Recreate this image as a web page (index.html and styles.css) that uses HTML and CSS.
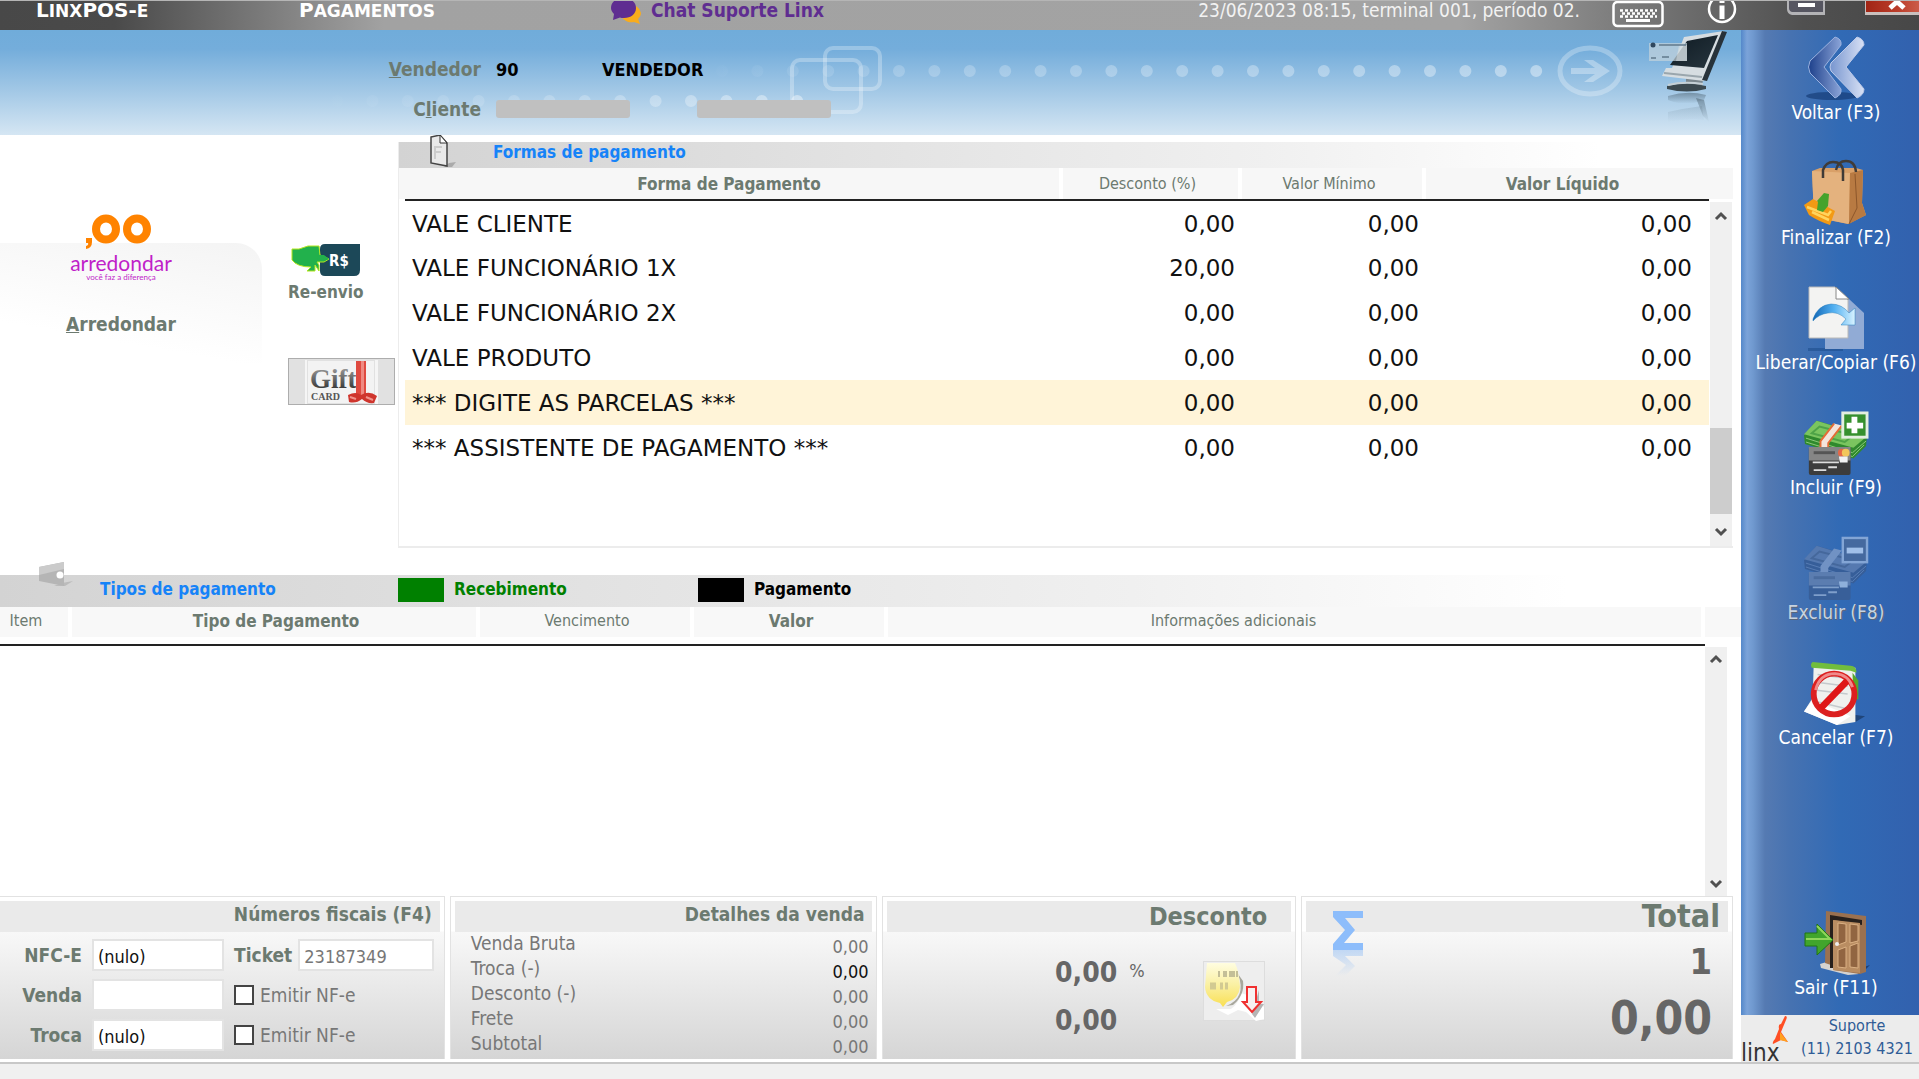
FILE: index.html
```html
<!DOCTYPE html>
<html lang="pt-BR">
<head>
<meta charset="utf-8">
<title>LinxPOS-e - Pagamentos</title>
<link rel="stylesheet" href="styles.css">
</head>
<body>
<header class="topbar">
  <span class="app-name">L<span class="low">inx</span>POS-<span class="low">e</span></span>
  <h1 class="page-name">P<span class="low">agamentos</span></h1>
  <a class="chat" href="#chat">
    <svg width="34" height="26" viewBox="0 0 34 26" aria-hidden="true"><path d="M20 4a10 10 0 0 1 11 8c0 3-2 5-3 6l2 5-6-2c-5 1-10-1-12-5z" fill="#f9ac1c"/><path d="M13-3c8 0 13 4 13 10s-5 10-12 10c-2 0-3 0-4-.5L3 19l1-6C2 11 1 9 1 7 1 1 6-3 13-3z" fill="#5f2d91"/></svg>
    <span>Chat Suporte Linx</span>
  </a>
  <span class="session">23/06/2023 08:15, terminal 001, período 02.</span>
  <button class="icon-btn keyboard" aria-label="Teclado">
    <svg width="52" height="28" viewBox="0 1 52 28"><rect x="1.500" y="2" width="49" height="24" rx="4" fill="none" stroke="#fff" stroke-width="2.500"/><path d="M26 2v-3" stroke="#fff" stroke-width="2"/><path d="M8 10.500h37M10 13.500h35M8 16.500h37" stroke="#fff" stroke-width="2.600" stroke-dasharray="3 2"/><path d="M14 20.500h24" stroke="#fff" stroke-width="3"/></svg>
  </button>
  <button class="icon-btn info" aria-label="Informações">
    <svg width="30" height="26" viewBox="0 1 30 26"><circle cx="15" cy="9" r="13" fill="none" stroke="#fff" stroke-width="2.500"/><path d="M15 5.500V19M15-1v4" stroke="#fff" stroke-width="5"/></svg>
  </button>
  <button class="icon-btn minimize" aria-label="Minimizar">
    <svg width="38" height="16" viewBox="0 1 38 16"><path d="M0 0h38v15H5q-5-1-5-6z" fill="#b3b3b6"/><path d="M2 0h34v12H5q-3-1-3-4z" fill="#565661"/><path d="M11 3h17v4H11z" fill="#fff"/></svg>
  </button>
  <button class="icon-btn close" aria-label="Fechar">
    <svg width="54" height="16" viewBox="0 1 54 16"><defs><linearGradient id="close" x2="1"><stop stop-color="#a12515"/><stop offset=".6" stop-color="#bb3d2a"/><stop offset="1" stop-color="#cb5c49"/></linearGradient></defs><path d="M0 0h54v15H0z" fill="#c9c0be"/><path d="M1 0h53v12H1z" fill="url(#close)"/><path d="M25 8l9-8M39 8L30 0" stroke="#fff" stroke-width="5"/></svg>
  </button>
</header>

<div class="workspace">
  <main class="content">
    <section class="banner">
      <svg class="banner-art" width="1741" height="105" viewBox="0 30 1741 105" aria-hidden="true">
        <defs>
          <linearGradient id="dotsA" gradientUnits="userSpaceOnUse" x1="700" x2="1540" y1="0" y2="0"><stop stop-color="#fff" stop-opacity="0"/><stop offset=".25" stop-color="#fff" stop-opacity=".2"/><stop offset="1" stop-color="#fff" stop-opacity=".4"/></linearGradient>
          <linearGradient id="dotsB" gradientUnits="userSpaceOnUse" x1="320" x2="800" y1="0" y2="0"><stop stop-color="#fff" stop-opacity="0"/><stop offset="1" stop-color="#fff" stop-opacity=".4"/></linearGradient>
          <linearGradient id="screen" x2="1" y2="1"><stop stop-color="#0f1a22"/><stop offset="1" stop-color="#27363f"/></linearGradient>
          <linearGradient id="mirror" x2="0" y2="1"><stop stop-color="#4d6270" stop-opacity=".55"/><stop offset="1" stop-color="#4d6270" stop-opacity="0"/></linearGradient>
        </defs>
        <path d="M722 71H1537" stroke="url(#dotsA)" stroke-width="12" stroke-linecap="round" stroke-dasharray="0 35.400"/>
        <path d="M337 101H802" stroke="url(#dotsB)" stroke-width="12" stroke-linecap="round" stroke-dasharray="0 35.400"/>
        <g fill="none" stroke="#fff" stroke-opacity=".28"><rect x="792" y="60" width="69" height="52" rx="8" stroke-width="4"/><rect x="825" y="48" width="55" height="41" rx="8" stroke-width="4"/><ellipse cx="1590" cy="71" rx="30" ry="23" stroke-width="5"/></g>
        <path d="M1571 68h24l-11-8h9l17 11-17 11h-9l11-8h-24z" fill="#fff" opacity=".33"/>
        <path d="M1668 96q20-6 38-1l-2 5-10 3q-14 2-26-3z" fill="url(#mirror)"/><path d="M1696 98l8 2 5 22-6-6z" fill="url(#mirror)"/><path d="M1668 112q18-4 34-6l2 14q-18-2-36 2z" fill="url(#mirror)" opacity=".3"/>
        <path d="M1686 76l17 3-1 8h-16z" fill="#7b878e"/><path d="M1667 86q18-5 39 0v3q-19 5-39 0z" fill="#3b4950"/><path d="M1668 85q16-4 35-1" stroke="#c5d0d6" stroke-width="2" fill="none"/>
        <path d="M1684 37l40-6-20 50-42-5 4-8h6z" fill="#d6dde1"/><path d="M1722 31l5 1-20 49-5-1z" fill="#27323a"/><path d="M1687 41l31-6-14 33-34-3z" fill="url(#screen)"/>
        <path d="M1664 73l38 4" stroke="#9aa6ad" stroke-width="2"/>
        <path d="M1649 43h38v18h-38z" fill="#c5d3dc" opacity=".7"/><path d="M1679 45h8v16h-11z" fill="#dde3e6" opacity=".5"/><circle cx="1653" cy="45" r="2.500" fill="#30485e"/><path d="M1659 45h27M1651 58h5M1662 57h7" stroke="#627a8c" stroke-width="1.500"/>
      </svg>
      <dl class="people">
        <div class="person"><dt><u>V</u>endedor</dt><dd class="code">90</dd><dd>VENDEDOR</dd></div>
        <div class="person"><dt>C<u>l</u>iente</dt><dd class="redacted"></dd><dd class="redacted"></dd></div>
      </dl>
    </section>

    <div class="upper">
      <aside class="shortcuts">
        <div class="round-up">
          <svg width="104" height="40" viewBox="0 0 104 40" aria-hidden="true"><g fill="none" stroke="#ff8300" stroke-width="8"><ellipse cx="37" cy="16" rx="10" ry="10.500"/><ellipse cx="68" cy="16" rx="10" ry="10.500"/></g><path d="M17 25h6v4q0 6-6 7v-3q3-1 2-3h-2z" fill="#ff8300"/></svg>
          <span class="brand">arredondar</span>
          <span class="slogan">você faz a diferença</span>
          <button class="text-btn round-label"><u>A</u>rredondar</button>
        </div>
        <div class="side-actions">
          <button class="text-btn resend">
            <svg width="70" height="34" viewBox="0 0 70 34" aria-hidden="true"><path d="M34 1h35v26q0 6-6 6H34q-5 0-5-5V6q0-5 5-5z" fill="#1c4858"/><path d="M1 6h7l9-3h11l1 9 5 2 4 2-5 3H26l2 3v6l-4-6v6h-8l4-4Q6 24 1 17z" fill="#22b14c" stroke="#b5e61d"/><path d="M27 12h6l5 4-5 2h-7z" fill="#22b14c"/><text x="38" y="23" class="rs">R$</text></svg>
            <span>Re-envio</span>
          </button>
          <button class="gift" aria-label="Gift Card">
            <svg width="74" height="44" viewBox="0 0 74 44"><defs><linearGradient id="giftInk" x2="0" y2="1"><stop stop-color="#aaa"/><stop offset="1" stop-color="#222"/></linearGradient></defs><path d="M0 0h2v44H0zM70 0h3v44h-3z" fill="#f5f5f5"/><rect x="3" y="1" width="66" height="42" fill="#f3f3f3"/><text x="5" y="28" class="gift-word" fill="url(#giftInk)">Gift</text><text x="6" y="40" class="gift-small">CARD</text><path d="M51 1h10v34H51z" fill="#df4a40"/><path d="M56 1h3v34h-3z" fill="#ef8a82"/><path d="M43 35q8-4 13 0 8-5 16 1l-3 7q-7 1-12-4-6 5-13 3z" fill="#cf352d"/><path d="M45 37l6 2M61 37l7 3" stroke="#f1928b" stroke-width="2"/></svg>
          </button>
        </div>
      </aside>

      <section class="methods">
        <h2 class="strip methods-title">
          <svg width="30" height="34" viewBox="0 0 30 34" aria-hidden="true"><path d="M22 29l7-1-4 5h-8z" fill="#aaa"/><path d="M4 3l9-2 7 8v23L4 29z" fill="#e9e9e9" stroke="#444" stroke-width="1.500"/><path d="M13 1v8h7z" fill="#fff" stroke="#333"/><path d="M8 12v13M8 13h7M8 18h6" stroke="#ccc" stroke-width="2"/></svg>
          <span>Formas de pagamento</span>
        </h2>
        <div class="grid-area">
          <table class="methods-table">
            <thead><tr><th class="strong">Forma de Pagamento</th><th class="c-disc">Desconto (%)</th><th class="c-min">Valor Mínimo</th><th class="c-net strong">Valor Líquido</th></tr></thead>
            <tbody>
              <tr><td>VALE CLIENTE</td><td>0,00</td><td>0,00</td><td>0,00</td></tr>
              <tr><td>VALE FUNCIONÁRIO 1X</td><td>20,00</td><td>0,00</td><td>0,00</td></tr>
              <tr><td>VALE FUNCIONÁRIO 2X</td><td>0,00</td><td>0,00</td><td>0,00</td></tr>
              <tr><td>VALE PRODUTO</td><td>0,00</td><td>0,00</td><td>0,00</td></tr>
              <tr class="selected"><td>*** DIGITE AS PARCELAS ***</td><td>0,00</td><td>0,00</td><td>0,00</td></tr>
              <tr><td>*** ASSISTENTE DE PAGAMENTO ***</td><td>0,00</td><td>0,00</td><td>0,00</td></tr>
            </tbody>
          </table>
          <div class="scroll scroll-methods">
            <svg width="12" height="8" viewBox="0 0 12 8"><path d="M1 7l5-5 5 5" class="chev"/></svg>
            <div class="thumb"></div>
            <svg width="12" height="8" viewBox="0 0 12 8"><path d="M1 1l5 5 5-5" class="chev"/></svg>
          </div>
        </div>
      </section>
    </div>

    <section class="types">
      <h2 class="strip types-title">
        <svg width="36" height="28" viewBox="0 0 36 28" aria-hidden="true"><path d="M24 21l11-2-8 5H16z" fill="#bbb"/><path d="M1 5l25-5v24L1 19z" fill="#b5b5b5"/><path d="M1 5l25-5v7L1 13z" fill="#cbcbcb"/><circle cx="22" cy="13" r="3.500" fill="#fff"/></svg>
        <span class="types-name">Tipos de pagamento</span>
        <span class="legend receipt">Recebimento</span>
        <span class="legend payment">Pagamento</span>
      </h2>
      <div class="types-area">
        <table class="types-table">
          <thead><tr><th class="c-item">Item</th><th class="c-type strong">Tipo de Pagamento</th><th class="c-due">Vencimento</th><th class="c-value strong">Valor</th><th class="c-info">Informações adicionais</th></tr></thead>
        </table>
        <div class="scroll scroll-types">
          <svg width="12" height="8" viewBox="0 0 12 8"><path d="M1 7l5-5 5 5" class="chev"/></svg>
          <svg width="12" height="8" viewBox="0 0 12 8"><path d="M1 1l5 5 5-5" class="chev"/></svg>
        </div>
      </div>
    </section>

    <div class="summary">
      <section class="panel">
        <h3>Números fiscais (F4)</h3>
        <form class="fiscal">
          <label class="name" for="nfce">NFC-E</label><input class="field" id="nfce" value="(nulo)">
          <div class="ticket"><label class="name" for="ticket">Ticket</label><input class="field muted" id="ticket" value="23187349"></div>
          <label class="name" for="venda">Venda</label><input class="field" id="venda">
          <label class="check"><input type="checkbox">Emitir NF-e</label>
          <label class="name" for="troca">Troca</label><input class="field" id="troca" value="(nulo)">
          <label class="check"><input type="checkbox">Emitir NF-e</label>
        </form>
      </section>
      <section class="panel">
        <h3>Detalhes da venda</h3>
        <dl class="details">
          <dt>Venda Bruta</dt><dd>0,00</dd>
          <dt>Troca (-)</dt><dd class="dark">0,00</dd>
          <dt>Desconto (-)</dt><dd>0,00</dd>
          <dt>Frete</dt><dd>0,00</dd>
          <dt>Subtotal</dt><dd>0,00</dd>
        </dl>
      </section>
      <section class="panel">
        <h3 class="medium">Desconto</h3>
        <div class="discount">
          <div class="amounts"><span>0,00</span><small>%</small><span>0,00</span></div>
          <button class="coin" aria-label="Aplicar desconto">
            <svg width="62" height="60" viewBox="0 0 62 60"><defs><linearGradient id="coin" x2="0" y2="1"><stop stop-color="#fffde0"/><stop offset=".5" stop-color="#faf0a2"/><stop offset="1" stop-color="#f9df52"/></linearGradient></defs><path d="M12 47h15q8-6 10-16l12 4 11 10v12l-8 2-10-9-8-2-10 5z" fill="#fff"/><path d="M34 12q9 24-12 32l7-1q12-10 10-24z" fill="#a8a79c"/><path d="M3 1h28q4 8 5 24-1 12-13 15l-4 5-3-4Q2 38 1 25z" fill="url(#coin)"/><path d="M14 12h20" stroke="#c4bf98" stroke-width="6" stroke-dasharray="2 3 4 2 6 1"/><path d="M6 24h18" stroke="#d2ca92" stroke-width="7" stroke-dasharray="6 4 3 2"/><path d="M55 28v14h5l-9 14-3-4z" fill="#b5b5b5"/><path d="M43 25h9v15h5l-9 10-9-10h4z" fill="#f7f0f0" stroke="#f03030" stroke-width="2"/></svg>
          </button>
        </div>
      </section>
      <section class="panel total">
        <svg class="sigma" width="34" height="66" viewBox="0 0 34 66" aria-hidden="true"><defs><linearGradient id="fade" x2="0" y2="1"><stop stop-color="#8fbcf5" stop-opacity=".5"/><stop offset="1" stop-color="#8fbcf5" stop-opacity="0"/></linearGradient></defs><path d="M1 0h30v7H13l10 12-11 13h19v7H1v-6l12-14L1 6z" fill="#8dbdfb"/><path d="M1 39h30v6H13l10 10-10 10H3l11-11L1 45z" fill="url(#fade)"/></svg>
        <h3 class="large">Total</h3>
        <div class="sums"><span class="count">1</span><span class="sum">0,00</span></div>
      </section>
    </div>
  </main>

  <nav class="sidebar">
    <div class="actions">
      <button class="action">
        <svg width="64" height="64" viewBox="0 0 64 64"><defs><linearGradient id="ch1"><stop stop-color="#1d408b"/><stop offset="1" stop-color="#8ba4d8"/></linearGradient><linearGradient id="ch2"><stop stop-color="#7795cf"/><stop offset="1" stop-color="#d8e1f5"/></linearGradient></defs><ellipse cx="28" cy="60" rx="26" ry="4" fill="#173d78" opacity=".7"/><path d="M31 1q7 2 6 8L20 31l17 22q1 6-6 9L6 37q-3-6 0-12z" fill="url(#ch1)" stroke="#9bb2df"/><path d="M53 1q7 2 7 8L42 31l18 22q0 6-7 9L27 35q-2-4 0-8z" fill="url(#ch2)" stroke="#bccae9"/></svg>
        <span>Voltar (F3)</span>
      </button>
      <button class="action">
        <svg width="64" height="64" viewBox="0 0 64 64"><path d="M8 10l8-3h36l7 2-1 33 4 12-18 9-34-7z" fill="#d9a068"/><path d="M8 10l38 2-1 51-35-7z" fill="#e4b27e"/><path d="M46 12l13-3-1 33 4 12-17 9z" fill="#b87a42"/><path d="M51 13l2 34-8 16" stroke="#8c562a" fill="none"/><path d="M19 17V9Q22 1 29 1q9 0 10 8v11M32 9Q34 0 42 0q9 0 10 11" fill="none" stroke="#403b37" stroke-width="2.500"/><path d="M0 44l9-6 22 12-5 14q-12-4-21-10z" fill="#f39a14"/><path d="M3 46l21 8 3-4M8 51l17 8" stroke="#ffd45e" stroke-width="2.500" fill="none"/><path d="M14 41l-1 8 6 2 5-6 1-12-5-1-7 8z" fill="#46a32c"/></svg>
        <span>Finalizar (F2)</span>
      </button>
      <button class="action">
        <svg width="64" height="64" viewBox="0 0 64 64"><defs><linearGradient id="swoop"><stop stop-color="#1267b6"/><stop offset=".5" stop-color="#53b1f2"/><stop offset="1" stop-color="#d9f3ff"/></linearGradient></defs><path d="M4 62h35v3H4z" fill="#174786" opacity=".5"/><path d="M21 13h24l15 14v36H21z" fill="#91abd5"/><path d="M5 1h26l13 13v38H5z" fill="#f3f3f2" stroke="#b9b9b9"/><path d="M32 1v12h13z" fill="#fff" stroke="#888"/><path d="M9 33Q14 19 27 18q11 0 18 9l6-5v17H37l5-6q-8-8-18-6-9 1-15 8z" fill="url(#swoop)" stroke="#2c80bd" stroke-width=".5"/></svg>
        <span>Liberar/Copiar (F6)</span>
      </button>
      <button class="action">
        <svg width="66" height="66" viewBox="0 0 66 66"><path d="M0 25L13 10l52 15-1 11-13 13L1 34z" fill="#2f892d"/><path d="M0 24L13 10l52 16-14 12z" fill="#7ac55f"/><path d="M8 23l8-7 35 9-9 7z" fill="none" stroke="#4ea347" stroke-width="2"/><path d="M2 28l48 15 14-12M2 32l48 15 12-12" stroke="#8cc97a" fill="none"/><path d="M31 13l8 2-14 18v7l-8-2v-7z" fill="#f4e4db"/><path d="M31 13L17 31v7M39 15L25 33v7" stroke="#e46b36" stroke-width="2" fill="none"/><rect x="5" y="37" width="43" height="29" rx="2" fill="#3c3c3c"/><path d="M5 37h43v14H5z" fill="#858585"/><path d="M10 43h22" stroke="#555" stroke-width="3"/><circle cx="39" cy="43" r="4" fill="#e56747"/><circle cx="43" cy="43" r="4" fill="#f3c65a"/><path d="M9 53h27M25 58h9M10 61h13" stroke="#ddd" stroke-width="2"/><path d="M36 47h9v6h-8z" fill="#f2f2f2"/><rect x="40" y="2" width="25" height="25" fill="#36902e" stroke="#e3eee0" stroke-width="3"/><path d="M52 6v17M44 15h17" stroke="#fff" stroke-width="6"/></svg>
        <span>Incluir (F9)</span>
      </button>
      <button class="action disabled">
        <svg width="66" height="66" viewBox="0 0 66 66"><path d="M0 25L13 10l52 15-1 11-13 13L1 34z" fill="#365e99"/><path d="M0 24L13 10l52 16-14 12z" fill="#5579b0"/><path d="M8 23l8-7 35 9-9 7z" fill="none" stroke="#45689c" stroke-width="2"/><path d="M2 28l48 15 14-12M2 32l48 15 12-12" stroke="#587db5" fill="none"/><path d="M31 13l8 2-14 18v7l-8-2v-7z" fill="#7192c4"/><rect x="5" y="37" width="43" height="29" rx="2" fill="#385f99"/><path d="M5 37h43v14H5z" fill="#5b7db0"/><path d="M10 43h22" stroke="#4a6c9e" stroke-width="3"/><path d="M9 53h27M25 58h9M10 61h13" stroke="#7f9fcb" stroke-width="2"/><path d="M36 47h9v6h-8z" fill="#8fb0da"/><rect x="40" y="2" width="25" height="25" fill="#45699f" stroke="#83a5d5" stroke-width="2.500"/><path d="M44 15h17" stroke="#a0bfe9" stroke-width="6"/></svg>
        <span>Excluir (F8)</span>
      </button>
      <button class="action">
        <svg width="66" height="66" viewBox="0 0 66 66"><path d="M48 55l15 2-10 6H40z" fill="#204579"/><path d="M10 3l43 4v56l-19 3L0 52l9-14z" fill="#eff0ed"/><path d="M9 40L0 52l34 14 14-9z" fill="#fff"/><path d="M50 12l6 8v20l-5-3z" fill="#57a82c"/><path d="M9 1l39 4q6 0 6 7l-6-2-40-3q-2-4 1-6z" fill="#71bd3d"/><path d="M14 14l32 4M13 22l32 4M11 30l34 4M9 41l34 8" stroke="#c4c9cc" stroke-width="1.500"/><ellipse cx="31" cy="34" rx="21" ry="21" fill="none" stroke="#dc2020" stroke-width="6"/><path d="M17 49L45 20" stroke="#df1717" stroke-width="7"/><path d="M12 30q4-17 20-17 14 1 18 14" stroke="#f08b8b" stroke-width="3" fill="none"/></svg>
        <span>Cancelar (F7)</span>
      </button>
      <button class="action exit">
        <svg width="64" height="64" viewBox="0 0 64 64"><path d="M16 53l13-4 26 14-11 1-27-7z" fill="#d5d3d0"/><path d="M60 56l6-2-7 7z" fill="#1b3f77"/><path d="M22 0l40 5v56l-6 2-27-4V8l-2-1v47l-6-2z" fill="#9a7150"/><path d="M26 4l32 5v5L30 9v48h-4z" fill="#27201c"/><path d="M29 9l27 3v50l-27-3z" fill="#b98d62"/><path d="M34 12l8 1v18l-8 3zM46 13l8 1v16l-8 2zM34 39l8-3v21l-8-1zM46 35l8-3v25l-8-1z" fill="#916541" stroke="#dbb184"/><path d="M1 22h12v-9l16 16-16 15v-9H1z" fill="#41a52c" stroke="#207712"/><path d="M13 15l13 13H2" stroke="#91d65b" stroke-width="2" fill="none"/><circle cx="33" cy="33" r="2" fill="#eee"/></svg>
        <span>Sair (F11)</span>
      </button>
    </div>
    <div class="support">
      <svg width="48" height="47" viewBox="0 0 48 47" aria-hidden="true"><path d="M44 1q3 0 1 4l-5 12 7 10-7-2-8 4q-1-2 2-5l4-10q-1-5 2-5z" fill="#ff4f24"/><path d="M39 17l8 10-8-2z" fill="#ffa21f"/><text x="0" y="46" class="linx">linx</text></svg>
      <p>Suporte<br>(11) 2103 4321</p>
    </div>
  </nav>
</div>
<footer class="statusbar"></footer>
</body>
</html>
```
FILE: styles.css
```css
* { box-sizing: border-box; }

body {
  margin: 0;
  min-height: 100vh;
  display: flex;
  flex-direction: column;
  background: #fff;
  color: #6c7a70;
  font: 19px/24px "DejaVu Sans Condensed", "DejaVu Sans", sans-serif;
}

h1, h2, h3, p, dl, dd { margin: 0; }
button, input { font: inherit; }
button { padding: 0; border: 0; background: none; cursor: pointer; }
svg { display: block; flex: none; overflow: visible; }

/* Title bar */
.topbar {
  display: flex;
  align-items: flex-start;
  height: 30px;
  padding-left: 36px;
  overflow: hidden;
  border-top: 1px solid #b5b5b5;
  background: linear-gradient(90deg, #484848 0, #4a4a4a 6%, #a2a2a2 20%, #a3a3a3 76%, #505050 94%, #474747);
  color: #fff;
  line-height: 18px;
}
.app-name, .page-name {
  font: bold 20px/18px "DejaVu Sans", sans-serif;
  text-transform: uppercase;
}
.low { font-size: 17px; }
.app-name { width: 263px; }
.page-name { width: 311px; }
.chat {
  display: flex;
  gap: 7px;
  color: #5f2d91;
  font-weight: bold;
  text-decoration: none;
}
.session { margin-left: auto; margin-right: 32px; color: #f2f2f2; }
.keyboard { margin-right: 43px; }
.info { margin-right: 50px; }
.minimize { margin-right: 40px; }

.workspace { flex: 1; display: flex; }
.content { flex: 1; min-width: 0; display: flex; flex-direction: column; padding-bottom: 3px; }

/* Seller and customer banner */
.banner {
  position: relative;
  height: 105px;
  overflow: hidden;
  background: linear-gradient(#70acda, #74addb 18%, #9fc6e5 55%, #d5e6f3);
}
.banner-art { position: absolute; top: 0; right: 0; }
.people { position: relative; padding-top: 19px; font-weight: bold; }
.person { display: flex; align-items: center; height: 40px; }
.person dt { width: 496px; padding-right: 15px; text-align: right; }
.person dd { padding-top: 2px; color: #000; font-size: 18px; }
.person .code { width: 106px; }
.person .redacted { width: 134px; height: 18px; margin-right: 67px; border-radius: 3px; background: #c0c0c0; }

/* Shortcuts and payment methods */
.upper { display: flex; height: 440px; padding: 7px 8px 27px 0; }
.shortcuts { width: 398px; display: flex; padding-top: 71px; }
.round-up {
  position: relative;
  width: 262px;
  display: flex;
  flex-direction: column;
  align-items: center;
  padding-right: 20px;
}
.round-up::before {
  content: "";
  position: absolute;
  z-index: -1;
  inset: 30px 0 auto 0;
  height: 120px;
  border-radius: 0 26px 0 0;
  background: linear-gradient(190deg, #f4f4f4, #fff 75%);
}
.brand { color: #c01fc9; font: 21px/20px Lato, sans-serif; }
.slogan { color: #c01fc9; font: 8px/8px Lato, sans-serif; }
.text-btn { color: #6c7a70; font-weight: bold; }
.round-label { margin-top: 31px; }
.side-actions { padding-top: 30px; display: flex; flex-direction: column; align-items: flex-start; width: 136px; padding-left: 26px; }
.resend { display: flex; flex-direction: column; align-items: center; gap: 3px; font-size: 17px; }
.rs { fill: #fff; font: bold 15px "DejaVu Sans Condensed", sans-serif; }
.gift {
  margin-top: 54px;
  width: 107px;
  height: 47px;
  display: grid;
  place-items: center;
  border: 1px solid #adadad;
  background: #e1e1e1;
}
.gift-word { font: bold 27px "Liberation Serif", serif; }
.gift-small { font: bold 10px "Liberation Serif", serif; fill: #555; }

.strip { display: flex; font-size: 17px; color: #1683f8; background: linear-gradient(90deg, #d3d3d3, #f0f0f0 65%, #fff 90%); }
.methods { flex: 1; display: flex; flex-direction: column; border: solid #ececec; border-width: 0 0 2px 1px; }
.methods-title { height: 26px; padding-left: 28px; gap: 36px; align-items: flex-start; line-height: 20px; }
.methods-title svg { margin-top: -8px; }
.grid-area { flex: 1; display: flex; padding-left: 6px; background: linear-gradient(#f7f7f7 31px, #fff 31px); }

table { border-collapse: collapse; table-layout: fixed; }
th {
  padding: 0;
  border-bottom: 2px solid #222;
  background: linear-gradient(#fff, #fff) right / 4px 100% no-repeat;
  font-size: 16px;
  font-weight: normal;
}
th.strong { font-size: 17px; font-weight: bold; }
.methods-table { flex: 1; align-self: flex-start; }
.methods-table th { height: 32px; padding-right: 10px; }
.methods-table th:last-child { background: none; }
.c-disc { width: 179px; }
.c-min { width: 184px; }
.c-net { width: 283px; }
.methods-table td {
  height: 45px;
  padding: 1px 7px 0;
  color: #111;
  font: 23px/26px "DejaVu Sans", sans-serif;
  text-align: right;
}
.methods-table td:first-child { text-align: left; }
.methods-table td:last-child { padding-right: 17px; }
.selected { background: #fff4d8; }

.scroll { width: 22px; display: flex; flex-direction: column; align-items: center; justify-content: space-between; background: #f0f0f0; padding: 10px 0; }
.chev { fill: none; stroke: #505050; stroke-width: 3; }
.scroll-methods { margin: 34px 1px 0; }
.thumb { width: 22px; height: 86px; margin-top: auto; margin-bottom: 14px; background: #cdcdcd; }

/* Payments already entered */
.types { flex: 1; display: flex; flex-direction: column; min-height: 200px; }
.types-title { height: 32px; padding: 0 0 4px 38px; align-items: center; line-height: 22px; }
.types-title svg { margin-top: -27px; margin-right: 26px; }
.types-name { width: 298px; }
.legend { display: flex; align-items: center; gap: 10px; width: 300px; }
.legend::before { content: ""; width: 46px; height: 24px; margin-top: 2px; background: currentColor; }
.receipt { color: #008000; }
.payment { color: #000; }
.types-area { flex: 1; display: flex; padding-right: 14px; background: linear-gradient(#f8f8f8 30px, #fff 30px); }
.types-table { flex: 1; align-self: flex-start; }
.types-table th { height: 38px; padding-bottom: 9px; }
.types-table .c-item { width: 72px; padding-right: 20px; }
.c-type { width: 408px; }
.c-due { width: 214px; }
.c-value { width: 194px; }
.types-table .c-info { padding-right: 126px; }
.scroll-types { margin-top: 40px; padding: 8px 0; }

/* Summary panels */
.summary {
  display: grid;
  grid-template-columns: 445fr 428fr 414fr 432fr;
  gap: 5px;
  padding-right: 8px;
}
.panel {
  position: relative;
  min-height: 163px;
  border: 1px solid #e2e2e2;
  border-bottom: 0;
  background: linear-gradient(#fff 34px, #f8f8f8 35px, #d5d5d5);
}
.panel:first-child { border-left: 0; }
.panel h3 { height: 31px; margin: 4px 4px 0; padding-right: 8px; background: #eaeaea; font-size: 19px; line-height: 26px; text-align: right; }
.panel:first-child h3 { margin-left: 0; }
.panel .medium { font-size: 25px; padding-right: 24px; line-height: 31px; }
.panel .large { font-size: 32px; line-height: 31px; }
.fiscal {
  display: grid;
  grid-template-columns: 82px 132px 1fr;
  grid-template-rows: repeat(3, 32px);
  gap: 8px 10px;
  padding-top: 7px;
  align-items: center;
}
.name { font-weight: bold; text-align: right; }
.field { width: 100%; min-width: 0; height: 32px; padding: 2px 4px 0; border: 2px solid #e3e3e3; background: #fff; color: #111; font-size: 18px; }
.ticket { display: flex; align-items: center; gap: 6px; padding-right: 10px; }
.muted, .check { color: #777; }
.check { display: flex; align-items: center; gap: 6px; }
.check input { appearance: none; width: 20px; height: 20px; margin: 0; border: 2px solid #444; background: #fff; }
.details { display: grid; grid-template-columns: 1fr auto; padding: 0 8px 0 20px; color: #777; }
.details dt { line-height: 23px; }
.details dd { padding-top: 2px; height: 25px; line-height: 25px; font-size: 18px; }
.details .dark { color: #111; }
.discount { display: flex; justify-content: flex-end; padding: 23px 30px 0 0; gap: 57px; color: #666; }
.amounts { display: grid; grid-template-columns: auto 17px; column-gap: 12px; row-gap: 12px; font: bold 28px/36px "DejaVu Sans Condensed", "DejaVu Sans", sans-serif; }
.amounts small { font-size: 18px; line-height: 32px; font-weight: normal; }
.coin { width: 62px; height: 60px; margin-top: 6px; border: 1px solid #ddd; background: #eee; }
.sigma { position: absolute; top: 14px; left: 30px; }
.sums { display: flex; flex-direction: column; align-items: flex-end; padding: 8px 20px 0 0; color: #666; font-weight: bold; }
.count { font-size: 36px; line-height: 44px; }
.sum { font-size: 46px; line-height: 68px; }

/* Function key bar */
.sidebar { width: 178px; display: flex; flex-direction: column; }
.actions {
  flex: 1;
  display: flex;
  flex-direction: column;
  align-items: center;
  gap: 37px;
  padding: 6px 0 16px 12px;
  background: linear-gradient(90deg, #5488ca 0, #7ba3d9 6px, #7099cf 12px, #557ab2 24px, #4672b1 50px, #316ab5 100px, #3261ae);
}
.action { display: flex; flex-direction: column; align-items: center; height: 88px; color: #fff; white-space: nowrap; }
.action svg { height: 64px; }
.disabled { color: #c9d3df; text-shadow: 1px 1px 0 #59667a; }
.exit { margin-top: auto; }
.support { display: flex; align-items: center; height: 47px; background: #ececec; color: #2f5c96; font-size: 16px; text-align: center; }
.support p { flex: 1; padding: 0 0 4px 6px; line-height: 23px; white-space: nowrap; }
.linx { font: 24px "DejaVu Sans Condensed", sans-serif; fill: #333; }

.statusbar { height: 17px; border-top: 2px solid #c8c8c8; background: #f0f0f0; }
```
